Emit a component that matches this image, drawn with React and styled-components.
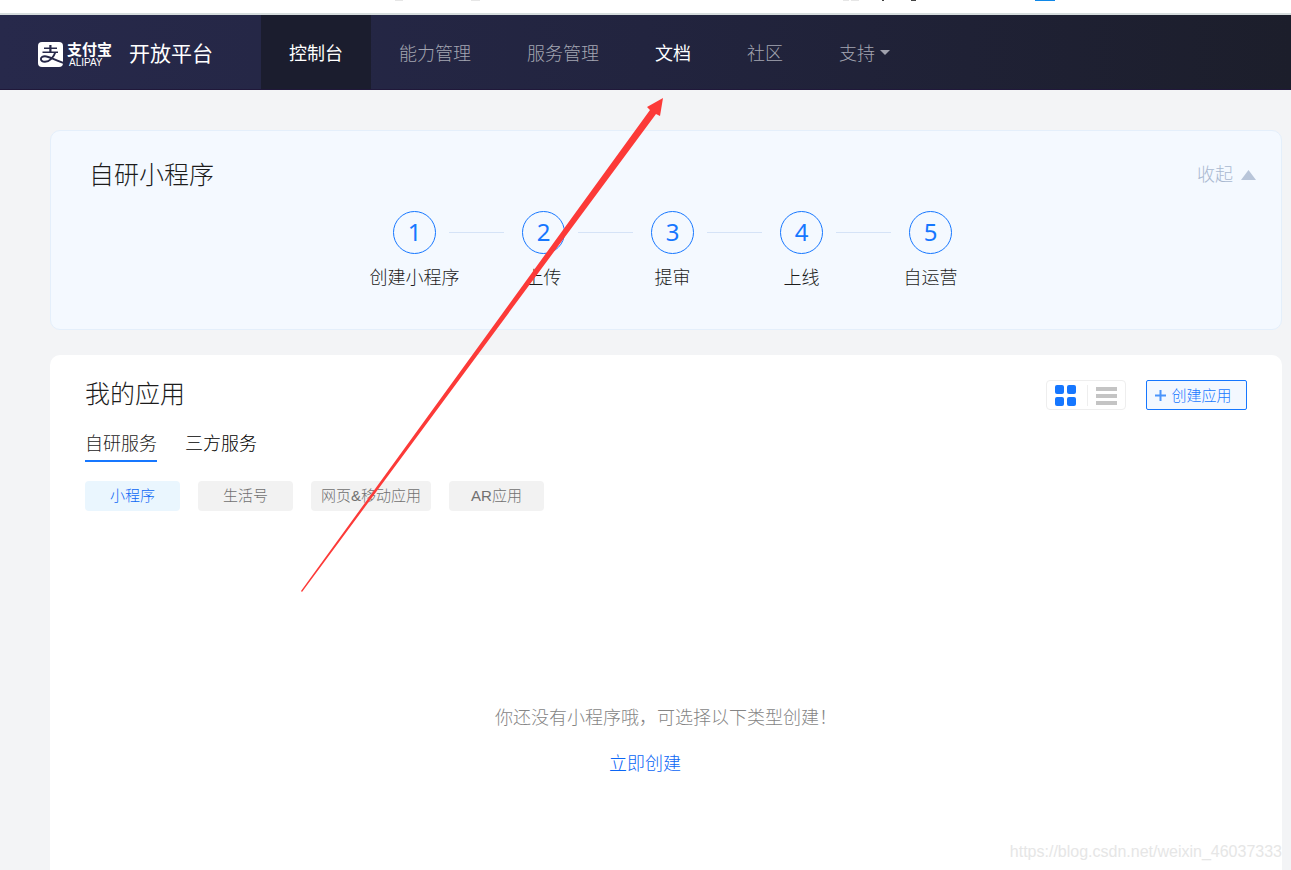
import React from 'react'
import styled, { createGlobalStyle } from 'styled-components'

const GlobalStyle = createGlobalStyle`
    * {
        box-sizing: border-box;
    }
    body {
        margin: 0;
        background: #f3f4f6;
        color: #1c1c1c;
        font-family: "Liberation Sans", "Noto Sans CJK SC", sans-serif;
        font-weight: 300;
    }
    button {
        font: inherit;
        color: inherit;
        background: none;
        border: 0;
        padding: 0;
        cursor: pointer;
    }
    a {
        color: inherit;
        text-decoration: none;
    }
    h1, h2, ol, p {
        margin: 0;
        padding: 0;
        font-weight: inherit;
        list-style: none;
    }
`;

const Page = styled.div`
    position: relative;
    display: flex;
    flex-direction: column;
    min-height: 100vh;
    overflow: hidden;
`;

// Browser edge
const Strip = styled.div`
    height: 15px;
    background: #fff;
    border-bottom: 2px solid #d6dddd;
    svg {
        display: block;
    }
`;

// Header
const Header = styled.header`
    display: flex;
    align-items: center;
    height: 75px;
    padding-left: 38px;
    background: linear-gradient(90deg, #27294b, #22243f 50%, #1c1e2b);
    border-bottom: 1px solid #20183a;
    color: #fff;
`;

const Brand = styled.a`
    display: flex;
    align-items: center;
    width: 223px;
    padding-top: 4px;
    font-weight: 400;
`;

const BrandName = styled.span`
    display: flex;
    flex-direction: column;
    margin: 0 17px 0 4px;
    font-size: 15px;
    line-height: 16px;
    font-weight: 700;
`;

const BrandLatin = styled.small`
    padding-left: 2px;
    font-size: 10px;
    line-height: 9px;
    font-weight: 400;
`;

const Platform = styled.span`
    font-size: 21px;
    line-height: 30px;
`;

const Nav = styled.nav`
    display: flex;
    align-self: stretch;
`;

const NavItem = styled.a`
    display: flex;
    align-items: center;
    padding: 0 28px;
    font-size: 18px;
    font-weight: ${(props) => props.$bright ? 400 : 300};
    color: ${(props) => props.$bright ? '#fff' : '#a4a6b2'};
    background: ${(props) => props.$current ? '#1b1d2e' : 'transparent'};
    svg {
        margin-left: 5px;
    }
`;

// Cards
const Main = styled.main`
    display: flex;
    flex-direction: column;
    flex: 1;
    gap: 25px;
    padding: 40px 9px 0 50px;
`;

const GuideCard = styled.section`
    height: 200px;
    padding: 25px 25px 0 38px;
    background: #f4f9ff;
    border: 1px solid #e4effb;
    border-radius: 10px;
`;

const CardHead = styled.div`
    display: flex;
    align-items: center;
    justify-content: space-between;
`;

const Title = styled.h2`
    font-size: 25px;
    line-height: 38px;
`;

const Collapse = styled.button`
    display: flex;
    align-items: center;
    gap: 8px;
    margin-bottom: 5px;
    font-size: 18px;
    color: #a9b8d0;
    svg {
        margin-top: 5px;
    }
`;

const Steps = styled.ol`
    display: flex;
    justify-content: center;
    margin-top: 17px;
`;

const Step = styled.li`
    display: flex;
    flex-direction: column;
    align-items: center;
    width: 43px;
    font-size: 18px;
    line-height: 28px;
    white-space: nowrap;
`;

const StepNumber = styled.span`
    width: 43px;
    height: 43px;
    margin-bottom: 10px;
    border: 1px solid #1677ff;
    border-radius: 50%;
    color: #1677ff;
    font-family: "Noto Sans", sans-serif;
    font-size: 24px;
    font-weight: 400;
    line-height: 39px;
    text-align: center;
`;

const StepLine = styled.li`
    width: 55px;
    height: 1px;
    margin: 21px 18px 0 13px;
    background: #d5e3f7;
`;

const AppsCard = styled.section`
    flex: 1;
    padding: 20px 35px 0;
    background: #fff;
    border-radius: 10px 10px 0 0;
`;

const Tools = styled.div`
    display: flex;
    gap: 20px;
    margin-top: 2px;
`;

const ViewSwitch = styled.div`
    display: flex;
    align-items: center;
    width: 80px;
    height: 30px;
    border: 1px solid #eee;
    border-radius: 4px;
`;

const ViewButton = styled.button`
    flex: 1;
    display: flex;
    justify-content: center;
    padding-right: 3px;
    color: ${(props) => props.$on ? '#1677ff' : '#c4c4c4'};
    & + & {
        padding-right: 0;
        border-left: 1px solid #eee;
    }
`;

const CreateButton = styled.button`
    display: flex;
    align-items: center;
    justify-content: center;
    gap: 5px;
    width: 101px;
    height: 30px;
    padding: 0 6px 2px 0;
    background: #f3f8ff;
    border: 1px solid #1677ff;
    border-radius: 2px;
    color: #1677ff;
    font-size: 15px;
    svg {
        margin-top: 3px;
    }
`;

const Tabs = styled.div`
    display: flex;
    gap: 28px;
    margin-top: 12px;
`;

const Tab = styled.button`
    height: 37px;
    padding-bottom: 1px;
    border-bottom: 2px solid ${(props) => props.$on ? '#1677ff' : 'transparent'};
    font-size: 18px;
    color: ${(props) => props.$on ? '#1c1c1c' : '#000'};
`;

const Chips = styled.div`
    display: flex;
    gap: 18px;
    margin-top: 19px;
`;

const Chip = styled.button`
    min-width: 95px;
    height: 30px;
    padding: 0 10px 3px;
    border-radius: 4px;
    font-size: 15px;
    color: ${(props) => props.$on ? '#0b66f5' : '#707070'};
    background: ${(props) => props.$on ? '#eaf6fe' : '#f2f2f2'};
`;

const Empty = styled.div`
    display: flex;
    flex-direction: column;
    align-items: center;
    gap: 18px;
    margin: 193px 0 90px;
    font-size: 18px;
    line-height: 28px;
    color: #858585;
`;

const EmptyLink = styled.a`
    margin-right: 42px;
    color: #0b66f5;
`;

// Overlays
const Arrow = styled.svg`
    position: absolute;
    left: 300px;
    top: 96px;
    pointer-events: none;
`;

const Watermark = styled.p`
    position: absolute;
    right: 9px;
    bottom: 9px;
    font-size: 16px;
    line-height: 18px;
    color: #e6e6e6;
`;

const navItems = [
    { text: '控制台', bright: true, current: true },
    { text: '能力管理' },
    { text: '服务管理' },
    { text: '文档', bright: true },
    { text: '社区' },
    { text: '支持', caret: true },
]

const steps = ['创建小程序', '上传', '提审', '上线', '自运营']
const tabs = ['自研服务', '三方服务']
const chips = ['小程序', '生活号', '网页&移动应用', 'AR应用']

const AlipayMark = () => (
    <svg width="25" height="25" viewBox="0 0 25 25" aria-hidden="true">
        <rect width="25" height="25" rx="4" fill="#fff" />
        <g fill="none" stroke="#262849">
            <path d="M6 6.200h13M4.500 10.200h15.500" strokeWidth="1.500" />
            <path d="M12.400 3v7" strokeWidth="2.200" />
            <path d="M17.300 10.200c-1.600 5-5.500 9.600-10.400 9.600-2.600 0-4-1.100-4-2.700 0-1.700 1.700-2.900 4-2.900 4.400 0 9 3.600 18.600 6.600" strokeWidth="1.900" />
        </g>
    </svg>
)

const App = () => {
    const [tab, setTab] = React.useState(0)
    const [chip, setChip] = React.useState(0)
    const [view, setView] = React.useState('grid')

    return (
        <Page lang="zh-CN">
            <GlobalStyle />
            <Strip>
                <svg width="1060" height="1" aria-hidden="true">
                    <path d="M395 0h8v1h-8zM471 0h9v1h-9zM843 0h6v1h-6zM851 0h8v1h-8z" fill="#e6e6e6" />
                    <path d="M882 0h2v1h-2zM911 0h5v1h-5z" fill="#444" />
                    <path d="M1035 0h20v1h-20z" fill="#1088e8" />
                </svg>
            </Strip>
            <Header>
                <Brand href="#">
                    <AlipayMark />
                    <BrandName>
                        支付宝
                        <BrandLatin>ALIPAY</BrandLatin>
                    </BrandName>
                    <Platform>开放平台</Platform>
                </Brand>
                <Nav>
                    {navItems.map((item) => (
                        <NavItem key={item.text} href="#" $bright={item.bright} $current={item.current}>
                            {item.text}
                            {item.caret && (
                                <svg width="10" height="5" aria-hidden="true">
                                    <path d="M0 0h10L5 5z" fill="#a0a1ad" />
                                </svg>
                            )}
                        </NavItem>
                    ))}
                </Nav>
            </Header>
            <Main>
                <GuideCard>
                    <CardHead>
                        <Title>自研小程序</Title>
                        <Collapse>
                            收起
                            <svg width="15" height="10" aria-hidden="true">
                                <path d="M0 10L7.500 0 15 10z" fill="#b8c5d9" />
                            </svg>
                        </Collapse>
                    </CardHead>
                    <Steps>
                        {steps.map((step, i) => (
                            <React.Fragment key={step}>
                                {i > 0 && <StepLine aria-hidden="true" />}
                                <Step>
                                    <StepNumber>{i + 1}</StepNumber>
                                    {step}
                                </Step>
                            </React.Fragment>
                        ))}
                    </Steps>
                </GuideCard>
                <AppsCard>
                    <CardHead>
                        <Title>我的应用</Title>
                        <Tools>
                            <ViewSwitch>
                                <ViewButton aria-label="grid" $on={view === 'grid'} onClick={() => setView('grid')}>
                                    <svg width="21" height="21" fill="currentColor">
                                        <rect width="9" height="9" rx="2" />
                                        <rect x="12" width="9" height="9" rx="2" />
                                        <rect y="12" width="9" height="9" rx="2" />
                                        <rect x="12" y="12" width="9" height="9" rx="2" />
                                    </svg>
                                </ViewButton>
                                <ViewButton aria-label="list" $on={view === 'list'} onClick={() => setView('list')}>
                                    <svg width="21" height="21" fill="currentColor">
                                        <path d="M0 2h21v4H0zM0 9h21v4H0zM0 16h21v4H0z" />
                                    </svg>
                                </ViewButton>
                            </ViewSwitch>
                            <CreateButton>
                                <svg width="11" height="11" aria-hidden="true">
                                    <path d="M0 5.500h11M5.500 0v11" stroke="#4a94fb" strokeWidth="2" />
                                </svg>
                                创建应用
                            </CreateButton>
                        </Tools>
                    </CardHead>
                    <Tabs>
                        {tabs.map((text, i) => (
                            <Tab key={text} $on={tab === i} onClick={() => setTab(i)}>{text}</Tab>
                        ))}
                    </Tabs>
                    <Chips>
                        {chips.map((text, i) => (
                            <Chip key={text} $on={chip === i} onClick={() => setChip(i)}>{text}</Chip>
                        ))}
                    </Chips>
                    <Empty>
                        <p>你还没有小程序哦，可选择以下类型创建！</p>
                        <EmptyLink href="#">立即创建</EmptyLink>
                    </Empty>
                </AppsCard>
            </Main>
            <Arrow width="365" height="497" aria-hidden="true">
                <path d="M1 495L350 14l-3-3L363 2l-3 18-4-2L2 496z" fill="#fc3a38" />
            </Arrow>
            <Watermark>https://blog.csdn.net/weixin_46037333</Watermark>
        </Page>
    )
}

export default App
